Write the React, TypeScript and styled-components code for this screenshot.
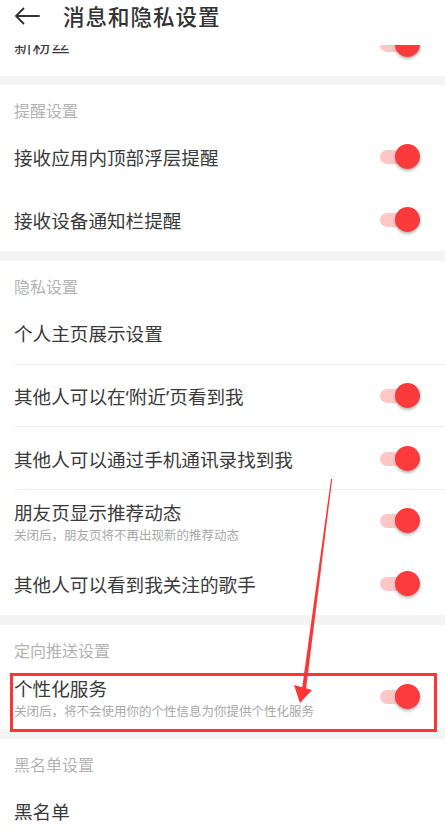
import React, { FC, ReactNode } from 'react'
import styled, { createGlobalStyle } from 'styled-components'

const GlobalStyle = createGlobalStyle`
html, body {
  margin: 0;
  padding: 0;
  background: #ffffff;
}
body {
  font-family: "Noto Sans CJK SC", "Noto Sans", sans-serif;
  -webkit-font-smoothing: antialiased;
}
`

const Page = styled.div`
position: relative;
width: 445px;
height: 833px;
overflow: hidden;
background: #ffffff;
`
const Header = styled.div`
position: relative;
z-index: 2;
height: 45px;
display: flex;
align-items: flex-start;
padding-top: 2px;
box-sizing: border-box;
background: #ffffff;
`
const BackBtn = styled.div`
width: 63px;
height: 28px;
display: flex;
align-items: center;
padding-left: 14px;
box-sizing: border-box;
`
const Title = styled.h1`
margin: 0;
font-size: 21.5px;
line-height: 28px;
font-weight: 500;
color: #333333;
letter-spacing: 1px;
`
const PeekRow = styled.div`
height: 31px;
overflow: hidden;
display: flex;
flex-direction: column;
justify-content: flex-end;
background: #ffffff;
`
const Band = styled.div<{ h?: number }>`
height: ${p => p.h ?? 10}px;
background: #f4f4f4;
`
const SectionHead = styled.div`
height: 41px;
padding: 16px 0 0 14px;
box-sizing: border-box;
font-size: 16px;
line-height: 18px;
color: #b3b3b3;
`
const Row = styled.div<{ divider?: boolean; h?: number }>`
position: relative;
height: ${p => p.h ?? 62.6}px;
flex-shrink: 0;
display: flex;
align-items: center;
justify-content: space-between;
padding: 0 25px 0 14px;
box-sizing: border-box;
background: #ffffff;
&::after {
  content: '';
  display: ${p => (p.divider ? 'block' : 'none')};
  position: absolute;
  left: 14px;
  right: 0;
  bottom: 0;
  height: 1px;
  background: #f0f0f0;
}
`
const TextCol = styled.div`
display: flex;
flex-direction: column;
`
const Label = styled.div`
font-size: 18.6px;
line-height: 24px;
color: #3a3a3a;
`
const Quote = styled.span`
font-family: "Noto Sans", sans-serif;
`
const Sub = styled.div`
font-size: 12.5px;
line-height: 16px;
margin-top: 3px;
color: #a8a8a8;
`
const Toggle = styled.span`
position: relative;
width: 40px;
height: 26px;
flex-shrink: 0;
`
const Track = styled.span`
position: absolute;
left: 0;
top: 6px;
width: 32px;
height: 14px;
border-radius: 7px;
background: #fdc7c8;
`
const Thumb = styled.span`
position: absolute;
right: 0;
top: 0;
width: 25px;
height: 25px;
border-radius: 50%;
background: #fb3a3c;
box-shadow: 0 2px 3px rgba(0, 0, 0, 0.28);
`
const Highlight = styled.div`
position: absolute;
left: 10px;
right: 8px;
top: 7px;
bottom: -3px;
border: 3px solid #ff3535;
pointer-events: none;
`
const Annotation = styled.svg`
position: absolute;
left: 0;
top: 0;
z-index: 3;
pointer-events: none;
`

const Switch: FC = () => (
  <Toggle>
    <Track />
    <Thumb />
  </Toggle>
)

type ItemProps = { label: ReactNode; sub?: string; toggle?: boolean; divider?: boolean }

const Item: FC<ItemProps> = ({ label, sub, toggle, divider }) => (
  <Row divider={divider}>
    <TextCol>
      <Label>{label}</Label>
      {sub && <Sub>{sub}</Sub>}
    </TextCol>
    {toggle && <Switch />}
  </Row>
)

export default function App() {
  return (
    <Page>
      <GlobalStyle />
      <Header>
        <BackBtn>
          <svg width="26" height="18" viewBox="0 0 26 18" fill="none">
            <path d="M25 9H2M9.5 1.5L2 9l7.5 7.5" stroke="#333" strokeWidth="1.8" strokeLinecap="round" strokeLinejoin="round" />
          </svg>
        </BackBtn>
        <Title>消息和隐私设置</Title>
      </Header>

      <PeekRow>
        <Row h={63}>
          <Label>新粉丝</Label>
          <Switch />
        </Row>
      </PeekRow>
      <Band h={9} />

      <SectionHead>提醒设置</SectionHead>
      <Item label="接收应用内顶部浮层提醒" toggle />
      <Item label="接收设备通知栏提醒" toggle />
      <Band />

      <SectionHead>隐私设置</SectionHead>
      <Item label="个人主页展示设置" divider />
      <Item
        label={<>其他人可以在<Quote>‘</Quote>附近<Quote>’</Quote>页看到我</>}
        toggle
        divider
      />
      <Item label="其他人可以通过手机通讯录找到我" toggle divider />
      <Item label="朋友页显示推荐动态" sub="关闭后，朋友页将不再出现新的推荐动态" toggle />
      <Item label="其他人可以看到我关注的歌手" toggle />
      <Band />

      <SectionHead>定向推送设置</SectionHead>
      <Row>
        <TextCol>
          <Label>个性化服务</Label>
          <Sub>关闭后，将不会使用你的个性信息为你提供个性化服务</Sub>
        </TextCol>
        <Switch />
        <Highlight />
      </Row>
      <Band />

      <SectionHead>黑名单设置</SectionHead>
      <Item label="黑名单" />

      <Annotation width="445" height="833" viewBox="0 0 445 833">
        <polygon points="331,479 332.2,479 306,689 302,689" fill="#ff3535" />
        <polygon points="294,685 312,690 300,703" fill="#ff3535" />
      </Annotation>
    </Page>
  )
}
